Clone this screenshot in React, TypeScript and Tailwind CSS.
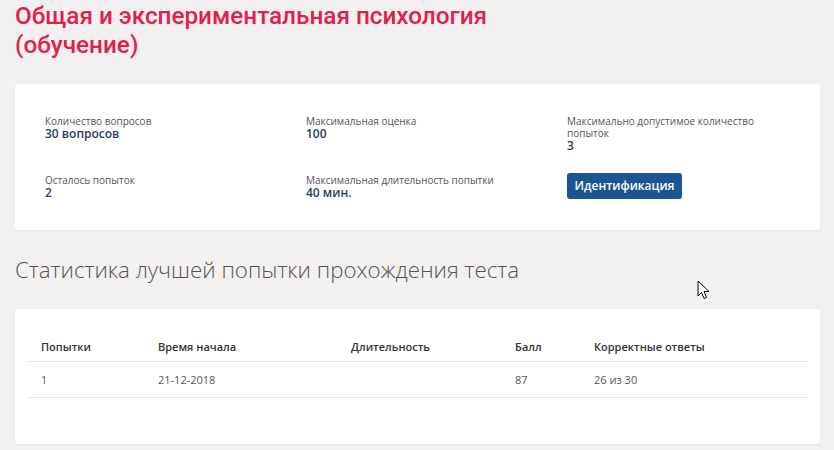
import React from 'react';

const font = { fontFamily: '"Open Sans", "Liberation Sans", sans-serif' };

function Info({ label, value, className = '' }: { label: string; value: string; className?: string }) {
  return (
    <div className={className}>
      <div className="text-[10px] leading-[12px] text-[#555]">{label}</div>
      <div className="text-[12px] leading-[13px] font-semibold text-[#2a3d63]">{value}</div>
    </div>
  );
}

const rows = [{ n: '1', start: '21-12-2018', dur: '', score: '87', correct: '26 из 30' }];

export default function App() {
  return (
    <div className="relative min-h-screen bg-[#f3f0f0] pl-[15px] pr-[14px] overflow-hidden" style={font}>
      {/* Title */}
      <h1 className="pt-[1px] text-[24.3px] leading-[29px] font-medium text-[#e3204b] font-['Roboto',sans-serif]">
        Общая и экспериментальная психология
        <br />
        (обучение)
      </h1>

      {/* Info card */}
      <div className="mt-[25px] bg-white rounded-[3px] shadow-[0_1px_2px_rgba(0,0,0,0.06)] pl-[30px] pt-[31px] pb-[31px]">
        <div className="grid grid-cols-[261px_261px_200px] gap-y-[20px]">
          <Info label="Количество вопросов" value="30 вопросов" />
          <Info label="Максимальная оценка" value="100" />
          <Info label="Максимально допустимое количество попыток" value="3" />
          <Info label="Осталось попыток" value="2" className="mt-[2px]" />
          <Info label="Максимальная длительность попытки" value="40 мин." className="mt-[2px]" />
          <div>
            <button className="w-[115px] h-[26px] rounded-[3px] bg-[#1b5692] text-white text-[12px] font-semibold">
              Идентификация
            </button>
          </div>
        </div>
      </div>

      {/* Stats heading */}
      <h2 className="mt-[25px] text-[22.3px] leading-[30px] font-light text-[#555]">
        Статистика лучшей попытки прохождения теста
      </h2>

      {/* Stats card */}
      <div className="mt-[24px] bg-white rounded-[3px] shadow-[0_1px_2px_rgba(0,0,0,0.06)] px-[12px] pt-[22px] pb-[46px]">
        <table className="w-full border-collapse text-[11px] leading-[15px]">
          <thead>
            <tr className="border-b border-[#e6e6e6] text-left text-[#333]">
              <th className="w-[117px] pl-[14px] pt-[8px] pb-[7px] font-semibold">Попытки</th>
              <th className="w-[193px] pl-[14px] pt-[8px] pb-[7px] font-semibold">Время начала</th>
              <th className="w-[164px] pl-[14px] pt-[8px] pb-[7px] font-semibold">Длительность</th>
              <th className="w-[79px] pl-[14px] pt-[8px] pb-[7px] font-semibold">Балл</th>
              <th className="pl-[14px] pt-[8px] pb-[7px] font-semibold">Корректные ответы</th>
            </tr>
          </thead>
          <tbody>
            {rows.map((r) => (
              <tr key={r.n} className="border-b border-[#e6e6e6] text-[#555]">
                <td className="pl-[14px] pt-[10px] pb-[10px]">{r.n}</td>
                <td className="pl-[14px] pt-[10px] pb-[10px]">{r.start}</td>
                <td className="pl-[14px] pt-[10px] pb-[10px]">{r.dur}</td>
                <td className="pl-[14px] pt-[10px] pb-[10px]">{r.score}</td>
                <td className="pl-[14px] pt-[10px] pb-[10px]">{r.correct}</td>
              </tr>
            ))}
          </tbody>
        </table>
      </div>

      {/* Mouse pointer */}
      <svg className="absolute left-[697px] top-[280px]" width="13" height="20" viewBox="0 0 13 20">
        <path
          d="M1 1 L1 16 L4.5 12.5 L7 18.5 L9.5 17.5 L7 11.5 L12 11.5 Z"
          fill="#fff"
          stroke="#000"
          strokeWidth="1"
          strokeLinejoin="round"
        />
      </svg>
    </div>
  );
}
